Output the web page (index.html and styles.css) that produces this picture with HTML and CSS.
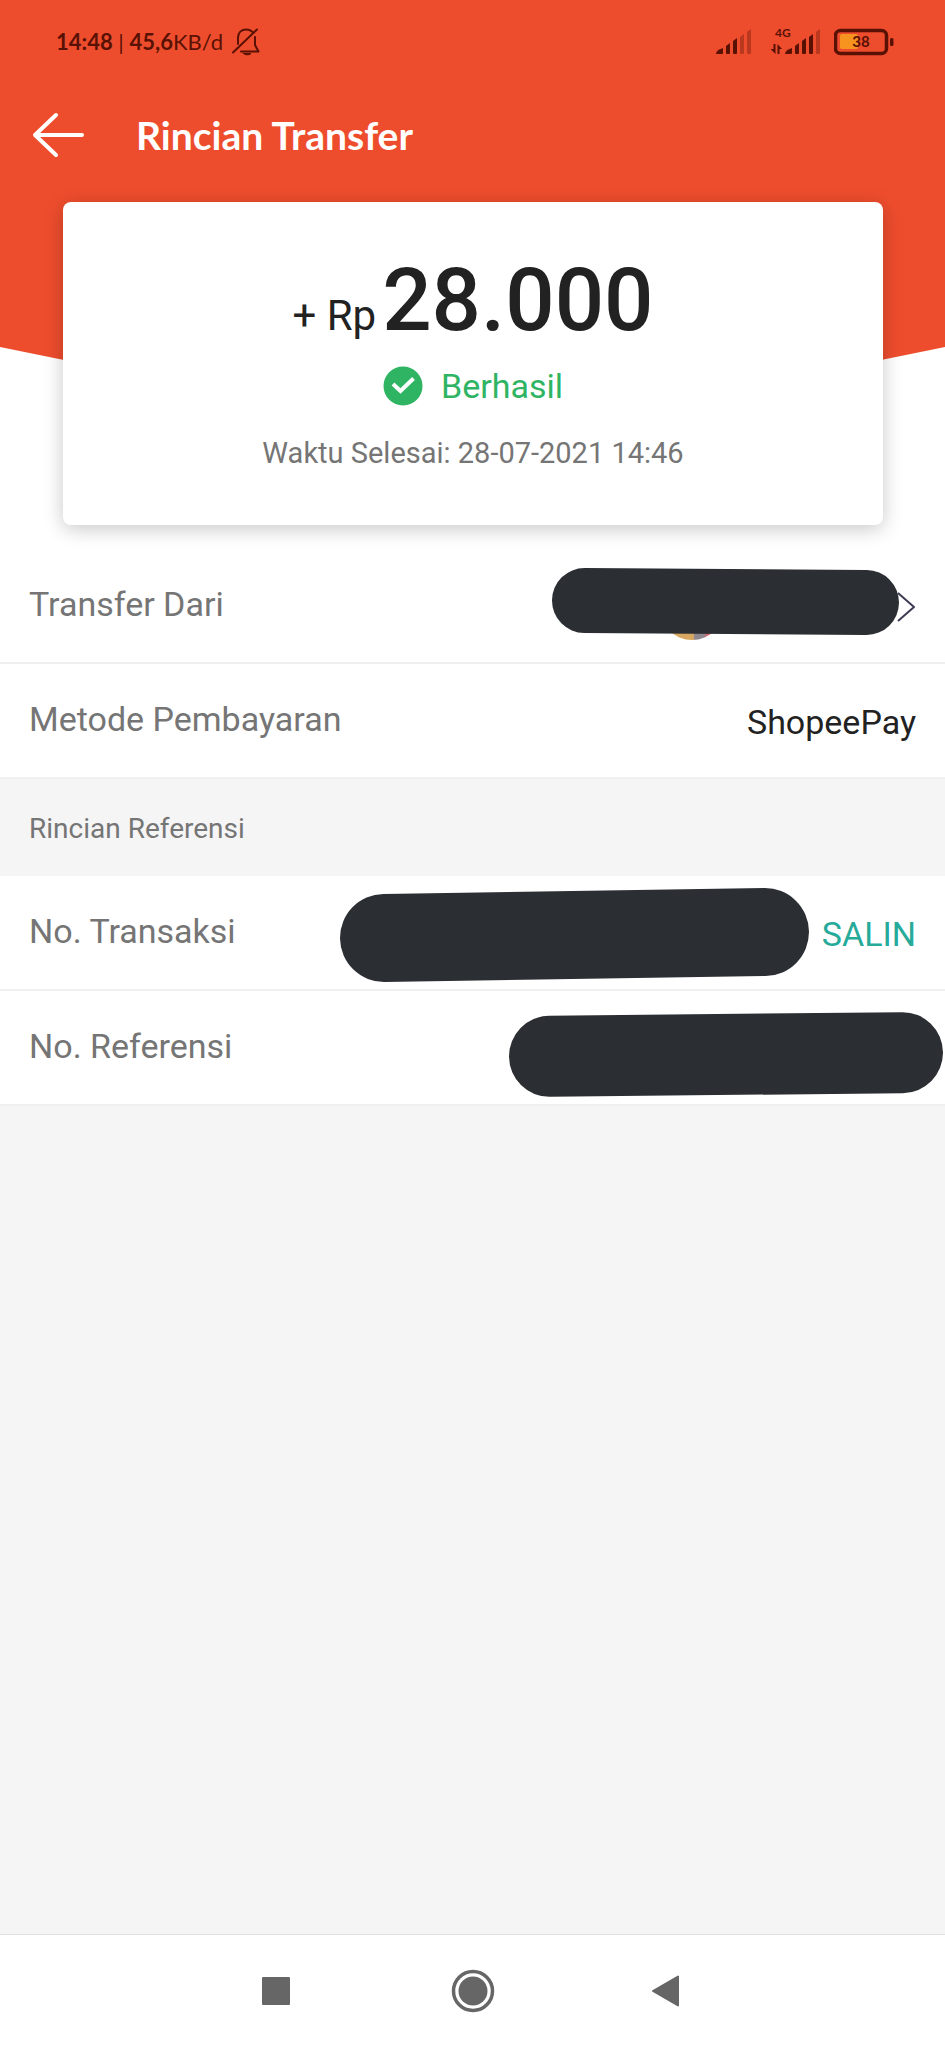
FILE: index.html
```html
<!DOCTYPE html>
<html lang="id">
<head>
<meta charset="utf-8">
<meta name="viewport" content="width=device-width, initial-scale=1">
<title>Rincian Transfer</title>
<link rel="stylesheet" href="styles.css">
</head>
<body>
<div class="hero">
  <div class="status-bar">
    <div class="status-left">
      <span><b>14:48</b> | <b>45,6</b>KB/d</span>
      <svg class="bell" width="30" height="30" viewBox="0 0 30 30" fill="none" stroke="currentColor" stroke-width="2" stroke-linecap="round" stroke-linejoin="round" aria-hidden="true">
        <path d="M2 25.500L26 2.500M7 17V10.500C7 5.500 10.500 2.500 15 2.500C17.500 2.500 19.500 3.200 21 4.600M24 10V18L27.500 24.500H10"/>
        <path d="M12.500 26.500H20C18.800 28.300 13.700 28.300 12.500 26.500Z" fill="currentColor" stroke-width="1"/>
      </svg>
    </div>
    <div class="status-right">
      <svg width="36" height="28" viewBox="0 0 36 28" fill="currentColor" aria-hidden="true">
        <path d="M0 26Q0 22 7 20V25Q7 26 6 26Z"/>
        <path d="M10 18L14 15V25Q14 26 13 26H11Q10 26 10 25Z"/>
        <path d="M17 13L21 10V25Q21 26 20 26H18Q17 26 17 25Z"/>
        <path class="faint" d="M24 9L28 6V25Q28 26 27 26H25Q24 26 24 25ZM31 4L35 1V25Q35 26 34 26H32Q31 26 31 25Z"/>
      </svg>
      <svg class="signal-data" width="52" height="36" viewBox="0 -4 52 36" fill="currentColor" aria-label="4G">
        <text class="network" x="5" y="9">4G</text>
        <path d="M3.500 16H5.500V26L0.500 21H3.500ZM7.500 26V16L12 21H9.500V26Z"/>
        <path d="M15 26Q15 22 22 20V25Q22 26 21 26Z"/>
        <path d="M25 18L29 15V25Q29 26 28 26H26Q25 26 25 25Z"/>
        <path d="M32 13L36 10V25Q36 26 35 26H33Q32 26 32 25Z"/>
        <path d="M39 9L43 6V25Q43 26 42 26H40Q39 26 39 25Z"/>
        <path class="faint" d="M46 4L50 1V25Q50 26 49 26H47Q46 26 46 25Z"/>
      </svg>
      <svg width="60" height="28" viewBox="0 0 60 28" aria-label="38%">
        <rect class="charge" x="6" y="6" width="18" height="15" rx="2"/>
        <rect x="1.500" y="2.500" width="51" height="23" rx="5" fill="none" stroke="currentColor" stroke-width="3.500"/>
        <rect x="56" y="10" width="3.500" height="8" rx="1.500" fill="currentColor"/>
        <text class="level" x="27" y="19" text-anchor="middle">38</text>
      </svg>
    </div>
  </div>

  <header class="app-bar">
    <button class="back" type="button" aria-label="Kembali">
      <svg width="52" height="46" viewBox="0 0 52 46" fill="none" stroke="currentColor" stroke-width="4" stroke-linecap="round" stroke-linejoin="round" aria-hidden="true">
        <path d="M50 23H3M24 3L3 23L24 43"/>
      </svg>
    </button>
    <h1>Rincian Transfer</h1>
  </header>

  <section class="card">
    <p class="amount"><span class="currency">+ Rp</span>28.000</p>
    <p class="result">
      <svg width="40" height="40" viewBox="0 0 40 40" aria-hidden="true">
        <circle cx="20" cy="20" r="19.500" fill="currentColor"/>
        <path d="M10 18L17.500 25L30.500 12.500" fill="none" stroke="#fff" stroke-width="4"/>
      </svg>
      Berhasil
    </p>
    <p class="finished">Waktu Selesai: 28-07-2021 14:46</p>
  </section>
</div>

<main>
  <dl class="rows">
    <div class="row">
      <dt>Transfer Dari</dt>
      <dd>
        <span class="avatar"></span>
        <span class="mask mask-sender"></span>
        <svg width="20" height="32" viewBox="0 0 20 32" fill="none" stroke="#3f3a52" stroke-width="2" stroke-linejoin="round" aria-hidden="true">
          <path d="M2 2L18 16L2 30"/>
        </svg>
      </dd>
    </div>
    <div class="row">
      <dt>Metode Pembayaran</dt>
      <dd>ShopeePay</dd>
    </div>
  </dl>
  <h2>Rincian Referensi</h2>
  <dl class="rows">
    <div class="row">
      <dt>No. Transaksi</dt>
      <dd><span class="mask mask-transaction"></span><button class="copy" type="button">SALIN</button></dd>
    </div>
    <div class="row">
      <dt>No. Referensi</dt>
      <dd><span class="mask mask-reference"></span></dd>
    </div>
  </dl>
</main>

<nav class="system-nav">
  <button type="button" aria-label="Aplikasi terbaru">
    <svg width="44" height="44" viewBox="0 0 44 44" fill="currentColor"><rect x="8" y="8" width="28" height="28" rx="1"/></svg>
  </button>
  <button type="button" aria-label="Beranda">
    <svg width="44" height="44" viewBox="0 0 44 44" fill="currentColor"><circle cx="22" cy="22" r="14.500"/><circle cx="22" cy="22" r="19.500" fill="none" stroke="currentColor" stroke-width="3.500"/></svg>
  </button>
  <button type="button" aria-label="Kembali">
    <svg width="44" height="44" viewBox="0 0 44 44" fill="currentColor" stroke="currentColor" stroke-width="2" stroke-linejoin="round"><path d="M5 22L30 7.500V36.500Z"/></svg>
  </button>
</nav>
</body>
</html>
```

FILE: styles.css
```css
* {
  box-sizing: border-box;
}

body {
  margin: 0;
  min-height: 100vh;
  display: flex;
  flex-direction: column;
  background: #f5f5f5;
  color: #222;
  font-family: Roboto, "Liberation Sans", sans-serif;
  font-size: 34px;
  line-height: 40px;
}

button {
  padding: 0;
  border: 0;
  background: none;
  color: inherit;
  font: inherit;
  cursor: pointer;
}

svg {
  display: block;
  flex: none;
}

h1,
h2,
p,
dl,
dd {
  margin: 0;
}

/* Header */

.hero {
  position: relative;
  isolation: isolate;
  padding-bottom: 24px;
  background: #fff;
}

.hero::before {
  content: "";
  position: absolute;
  inset: 0 0 auto;
  z-index: -1;
  height: 443px;
  background: #ee4d2d;
  clip-path: polygon(0 0, 100% 0, 100% 347px, 50% 100%, 0 347px);
}

.status-bar {
  display: flex;
  justify-content: space-between;
  align-items: center;
  height: 84px;
  padding: 0 51px 0 56px;
  color: #591104;
  font-family: Lato, sans-serif;
  font-size: 22px;
}

.status-left,
.status-right {
  display: flex;
  align-items: center;
}

.status-left {
  gap: 8px;
}

.status-right {
  gap: 12px;
}

.signal-data {
  margin-left: 6px;
}

.faint {
  opacity: 0.35;
}

.network {
  font-size: 12px;
  font-weight: 700;
}

.charge {
  fill: #f79420;
}

.level {
  fill: currentColor;
  font-size: 15px;
  font-weight: 700;
}

.app-bar {
  display: flex;
  align-items: center;
  gap: 52px;
  height: 102px;
  padding: 0 32px;
  color: #fff;
}

h1 {
  font-family: Lato, sans-serif;
  font-size: 39px;
  font-weight: 700;
  line-height: 48px;
}

/* Summary card */

.card {
  display: flex;
  flex-direction: column;
  align-items: center;
  margin: 16px 62px 0 63px;
  padding: 48px 24px 54px;
  border-radius: 8px;
  background: #fff;
  box-shadow: 0 4px 20px rgba(0, 0, 0, 0.22);
}

.amount {
  font-size: 87px;
  font-weight: 500;
  line-height: 100px;
}

.currency {
  margin-right: 6px;
  font-size: 42px;
  font-weight: 400;
  line-height: 1;
}

.result {
  display: flex;
  align-items: center;
  gap: 18px;
  margin-top: 16px;
  color: #2fb463;
}

.finished {
  margin-top: 29px;
  color: #757575;
  font-size: 29px;
  line-height: 36px;
}

/* Detail rows */

.row {
  position: relative;
  display: flex;
  justify-content: space-between;
  align-items: center;
  height: 115px;
  padding: 0 29px;
  border-bottom: 2px solid #f0f0f0;
  background: #fff;
}

dt {
  padding-bottom: 4px;
  color: #757575;
}

dd {
  display: flex;
  align-items: center;
  padding-top: 2px;
}

h2 {
  padding: 32px 29px 29px;
  color: #757575;
  font-size: 28px;
  font-weight: 400;
  line-height: 36px;
}

.copy {
  color: #26aa99;
}

.avatar {
  width: 66px;
  height: 66px;
  margin-right: 171px;
  border-radius: 50%;
  background: linear-gradient(90deg, #d9a860 52%, #8f8790 54% 68%, #e0606a 74%);
}

.mask {
  position: absolute;
  border-radius: 50px;
  background: #2b2f33;
}

.mask-sender {
  top: 20px;
  right: 46px;
  width: 347px;
  height: 65px;
  transform: rotate(0.4deg);
}

.mask-transaction {
  top: 15px;
  right: 136px;
  width: 469px;
  height: 88px;
  transform: rotate(-0.9deg);
}

.mask-reference {
  top: 23px;
  right: 2px;
  width: 434px;
  height: 81px;
  transform: rotate(-0.6deg);
}

/* System navigation */

.system-nav {
  display: grid;
  grid-template-columns: repeat(3, 1fr);
  margin-top: auto;
  padding: 34px 177px 35px;
  border-top: 1px solid #e0e0e0;
  background: #fff;
  color: #666;
}

.system-nav button {
  display: flex;
  justify-content: center;
}
```
